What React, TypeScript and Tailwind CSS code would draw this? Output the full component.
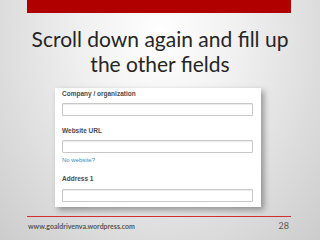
import React from "react";

const Field = ({ label, className = "" }: { label: string; className?: string }) => (
  <div className={`h-[12px] text-[6.5px] leading-[12px] font-bold text-[#4a4a4a] ${className}`}>{label}</div>
);

const Input = ({ className = "" }: { className?: string }) => (
  <div
    className={`h-[13px] w-[191px] rounded-[1px] border border-[#c8c8c8] bg-white shadow-[inset_0_1px_1px_rgba(0,0,0,0.08)] ${className}`}
  />
);

const App = () => {
  return (
    <div
      className="relative flex h-[240px] w-[320px] flex-col overflow-hidden bg-[radial-gradient(ellipse_at_50%_15%,#ffffff_0%,#f0f0f0_35%,#dadada_75%,#cccccc_100%)]"
      style={{ fontFamily: "Lato, 'Noto Sans', sans-serif" }}
    >
      {/* top red band */}
      <div className="mx-[27px] h-[13px] w-[264px] bg-[#b00000]" />

      {/* title */}
      <h1 className="mt-[13px] text-center text-[21px] leading-[25px] text-[#262626]">
        Scroll down again and fill up
        <br />
        the other fields
      </h1>

      {/* screenshot of the form */}
      <div
        className="ml-[55px] mt-[12px] flex w-[206px] flex-col bg-white pb-[5px] pl-[7px] shadow-[3px_3px_6px_rgba(0,0,0,0.35)]"
        style={{ fontFamily: "'Liberation Sans', Arial, sans-serif" }}
      >
        <Field label="Company / organization" />
        <Input className="mt-[3px]" />
        <Field label="Website URL" className="mt-[9px]" />
        <Input className="mt-[3px]" />
        <div className="mt-[1px] h-[12px] text-[6px] leading-[12px] text-[#2a8fc4]">No website?</div>
        <Field label="Address 1" className="mt-[7px]" />
        <Input className="mt-[4px]" />
      </div>

      {/* footer */}
      <div className="mx-[27px] mt-[9px] h-[1px] w-[264px] bg-[#d03030]" />
      <div className="mx-[28px] mt-[3px] flex h-[12px] items-center justify-between leading-[12px] text-[#595959]">
        <span className="text-[7px] font-bold">www.goaldrivenva.wordpress.com</span>
        <span className="mr-[3px] text-[9px]">28</span>
      </div>
    </div>
  );
};

export default App;
